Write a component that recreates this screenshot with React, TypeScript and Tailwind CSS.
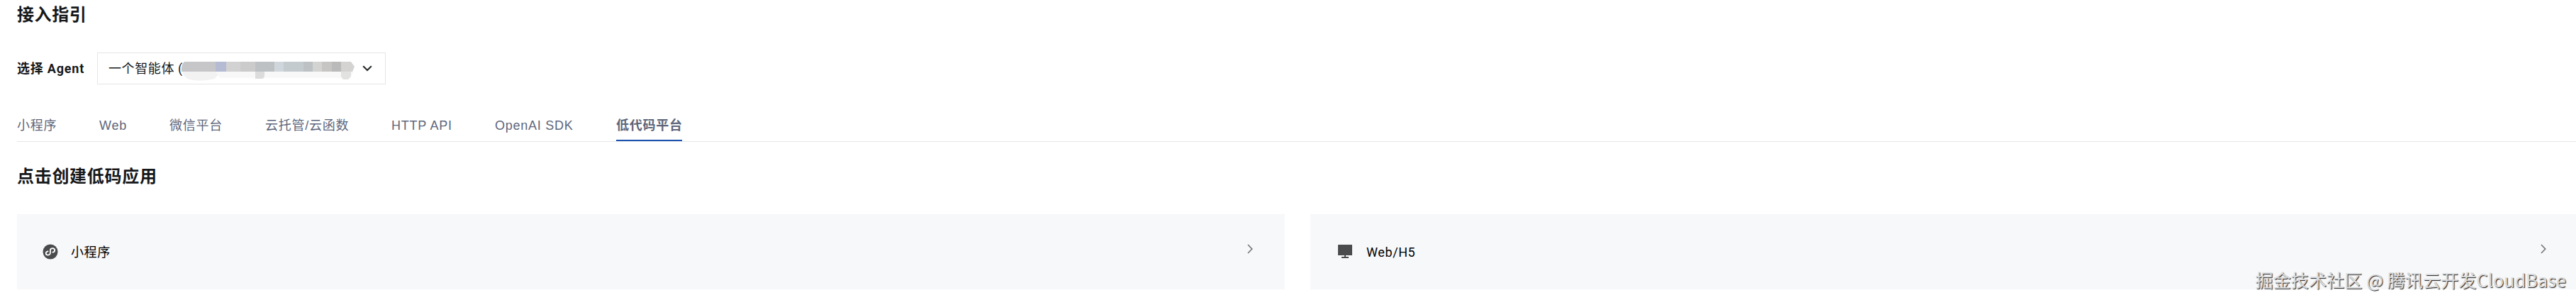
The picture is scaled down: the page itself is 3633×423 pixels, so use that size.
import { useState } from "react";

interface Tab {
  label: string;
  width: string;
}

const tabs: Tab[] = [
  { label: "小程序", width: "w-[56px]" },
  { label: "Web", width: "w-[39px]" },
  { label: "微信平台", width: "w-[75px]" },
  { label: "云托管/云函数", width: "w-[118px]" },
  { label: "HTTP API", width: "w-[86px]" },
  { label: "OpenAI SDK", width: "w-[111px]" },
  { label: "低代码平台", width: "w-[93px]" },
];

const MiniProgramIcon = () => (
  <svg viewBox="0 0 22 22" className="size-[22px]">
    <circle cx="11" cy="11" r="10.5" fill="#4a4b4d" />
    <path
      d="M7.600 10.400C5.800 10.700 4.700 11.800 4.700 13.100c0 1.500 1.300 2.600 2.900 2.600s3.300-1.200 3.300-3V9c0-1.700 1.500-2.800 3.200-2.800s3.100 1.100 3.100 2.700c0 1.300-1.100 2.400-2.900 2.700"
      fill="none"
      stroke="#fff"
      strokeWidth="1.8"
      strokeLinecap="round"
    />
  </svg>
);

const MonitorIcon = () => (
  <svg viewBox="0 0 22 22" className="size-[22px]" fill="#4a4b4d">
    <rect x="1" y="1" width="20" height="15" rx="0.5" />
    <rect x="10" y="16" width="2" height="2.500" />
    <rect x="6" y="18" width="10" height="2" />
  </svg>
);

const ArrowIcon = () => (
  <svg viewBox="0 0 8 14" className="-mt-[8px] h-3.5 w-2" fill="none" stroke="#77797c" strokeWidth="1.7">
    <path d="M1 1l5.700 6L1 13" />
  </svg>
);

// Masked agent id
const MaskedId = () => (
  <svg viewBox="0 0 247 32" className="mt-[7px] -ml-[3px] h-8 w-[247px]">
    <path d="M4 17h52l-8 10q-20 5-36 1Q5 26 2 17z" fill="#f2f2f2" />
    <path d="M48 17h196l-6 9H56z" fill="#f8f8f8" />
    <path d="M5 3h44v14H1Q0 8 5 3z" fill="#c6c6c9" />
    <rect x="49" y="3" width="15" height="14" fill="#b5bbd3" />
    <rect x="64" y="3" width="20" height="14" fill="#d2d2d3" />
    <rect x="84" y="3" width="21" height="14" fill="#cbcbcc" />
    <rect x="105" y="3" width="27" height="14" fill="#bec1c3" />
    <rect x="132" y="3" width="13" height="14" fill="#d0d7dc" />
    <rect x="145" y="3" width="28" height="14" fill="#c4cbcf" />
    <rect x="173" y="3" width="13" height="14" fill="#bdc1c4" />
    <rect x="186" y="3" width="13" height="14" fill="#d3d3d2" />
    <rect x="199" y="3" width="14" height="14" fill="#c7c5c4" />
    <rect x="213" y="3" width="13" height="14" fill="#bababa" />
    <path d="M226 3h14l5 7-3 7h-16z" fill="#d5d3d1" />
    <path d="M105 17h13v5q0 5-4 5h-9z" fill="#dcdcdc" />
    <path d="M226 17h14v7l-4 4h-7l-3-4z" fill="#e2e2e1" />
  </svg>
);

const App = () => {
  const [activeTab, setActiveTab] = useState<string>("低代码平台");

  return (
    <div className="relative h-[423px] overflow-hidden bg-white pl-6 text-[18px] tracking-[0.6px] text-[#16181a] font-[Roboto,'Noto_Sans_CJK_SC',sans-serif]">
      <h2 className="h-[74px] pt-[3px] text-[24px] leading-9 font-bold tracking-[0.6px]">接入指引</h2>

      <div className="flex h-[45px] items-center">
        <span className="w-[113px] shrink-0 whitespace-nowrap font-bold tracking-[0.8px]">选择 Agent</span>
        <button className="flex h-[45px] w-[407px] items-center border border-[#e4e5e7] pl-[15px] text-left">
          <span className="w-[105px] shrink-0 whitespace-nowrap">一个智能体 (</span>
          <MaskedId />
          <svg viewBox="0 0 14 9" className="ml-[9px] h-[9px] w-[14px]" fill="none" stroke="#2b2d30" strokeWidth="2.200">
            <path d="M1.200 1.200L7 7l5.800-5.800" />
          </svg>
        </button>
      </div>

      <div className="mt-[32px] flex h-[49px] w-[3612px] gap-[60px] border-b border-[#e3e5e7] tracking-[0.75px] font-['Liberation_Sans','Noto_Sans_CJK_SC',sans-serif]">
        {tabs.map((tab) => (
          <button
            key={tab.label}
            onClick={() => setActiveTab(tab.label)}
            className={`${tab.width} h-[48px] shrink-0 border-b-2 text-left whitespace-nowrap text-[#5d667b] ${
              activeTab === tab.label ? "border-[#1a52b0] font-bold" : "border-transparent"
            }`}
          >
            <span className="block pt-[7px]">{tab.label}</span>
          </button>
        ))}
      </div>

      <h3 className="h-[102px] pt-[31px] text-[24px] leading-9 font-bold tracking-[0.7px]">点击创建低码应用</h3>

      <div className="grid w-[3612px] grid-cols-2 gap-9 text-black">
        <div className="flex h-[106px] items-center bg-[#f7f8fa] pr-[45px] pl-9">
          <MiniProgramIcon />
          <span className="ml-[18px] flex-1">小程序</span>
          <ArrowIcon />
        </div>
        <div className="flex h-[106px] items-center bg-[#f7f8fa] pr-[45px] pl-[38px]">
          <MonitorIcon />
          <span className="ml-[19px] flex-1">Web/H5</span>
          <ArrowIcon />
        </div>
      </div>

      <div className="absolute right-[14px] bottom-[11px] text-[25px] leading-9 tracking-[0.15px] whitespace-nowrap text-[#dcdddf] font-['Noto_Sans_CJK_SC',sans-serif] [text-shadow:1px_1px_1px_#222]">
        掘金技术社区 @ 腾讯云开发CloudBase
      </div>
    </div>
  );
};

export default App;
